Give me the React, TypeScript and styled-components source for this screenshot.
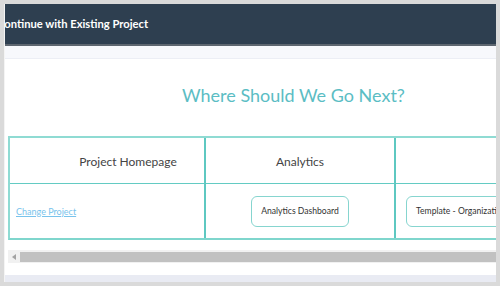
import React from "react";
import styled, { createGlobalStyle } from "styled-components";

const Global = createGlobalStyle`
  html, body { margin: 0; padding: 0; }
  body { width: 500px; height: 286px; overflow: hidden; background: #d8d8d8; font-family: Lato, "Open Sans", sans-serif; }
`;

const Frame = styled.div`
  width: 500px;
  height: 286px;
  box-sizing: border-box;
  padding: 4px 5px 4px 4px;
  background: #dadada;
`;

const Inner = styled.div`
  width: 100%;
  height: 100%;
  background: #ffffff;
  border-left: 1px solid #f4f4f4;
  overflow: hidden;
  display: flex;
  flex-direction: column;
`;

const Header = styled.div`
  height: 39px;
  flex: none;
  background: #2e3f50;
  border-bottom: 2px solid #5d6670;
  display: flex;
  align-items: center;
  overflow: hidden;
  padding-bottom: 1px;
`;

const HeaderTitle = styled.h1`
  margin: 0 0 0 -8px;
  color: #ffffff;
  font-size: 11.2px;
  font-weight: 700;
  white-space: nowrap;
`;

const SubBar = styled.div`
  height: 12px;
  flex: none;
  background: #f7f8fc;
  border-bottom: 1px solid #eceef5;
`;

const Title = styled.h2`
  margin: 24px 0 0 177px;
  color: #5bbdc4;
  font-size: 18px;
  font-weight: 400;
  white-space: nowrap;
  line-height: 24px;
`;

const TableWrap = styled.div`
  margin: 29px 0 0 3px;
  overflow: hidden;
  flex: none;
`;

const Table = styled.div`
  display: grid;
  grid-template-columns: 196px 190px 220px;
  grid-template-rows: 46px 54px;
  width: 606px;
  border-top: 2px solid #8fdbd3;
  border-left: 2px solid #8fdbd3;
  border-bottom: 2px solid #7fd6cd;
`;

const Cell = styled.div<{ $head?: boolean; $align?: string }>`
  box-sizing: border-box;
  border-right: 2px solid #5ec8c1;
  border-bottom: ${(p) => (p.$head ? "1px solid #63cbc3" : "none")};
  display: flex;
  align-items: center;
  justify-content: ${(p) => p.$align || "center"};
  color: #444;
  font-size: 12px;
  overflow: hidden;
  white-space: nowrap;
`;

const HeadText = styled.span<{ $shift?: number }>`
  margin-left: ${(p) => p.$shift || 0}px;
  padding-top: 2px;
`;

const Link = styled.a`
  margin-left: 6px;
  color: #79c3ec;
  font-size: 9px;
  text-decoration: underline;
`;

const Pill = styled.div<{ $offset?: number }>`
  box-sizing: border-box;
  height: 31px;
  flex: none;
  margin-left: ${(p) => p.$offset || 0}px;
  border: 1px solid #86d5cf;
  border-radius: 6px;
  display: flex;
  align-items: center;
  justify-content: center;
  padding: 0 9px;
  font-size: 8.6px;
  color: #333;
`;

const Scroll = styled.div`
  margin: 10px 0 0 3px;
  height: 13px;
  flex: none;
  display: flex;
  background: #f1f1f1;
  overflow: hidden;
`;

const Arrow = styled.div`
  width: 11px;
  flex: none;
  display: flex;
  align-items: center;
  justify-content: center;
`;

const Thumb = styled.div`
  flex: 1;
  margin: 2px 0 1px 1px;
  background: #c1c1c1;
`;

const BottomBar = styled.div`
  margin-top: 12px;
  height: 7px;
  flex: none;
  background: #e9ebf3;
`;

export default function App() {
  return (
    <>
      <Global />
      <Frame>
        <Inner>
          <Header>
            <HeaderTitle>Continue with Existing Project</HeaderTitle>
          </Header>
          <SubBar />
          <Title>Where Should We Go Next?</Title>
          <TableWrap>
            <Table>
              <Cell $head>
                <HeadText $shift={42}>Project Homepage</HeadText>
              </Cell>
              <Cell $head>
                <HeadText>Analytics</HeadText>
              </Cell>
              <Cell $head />
              <Cell $align="flex-start">
                <Link href="#">Change Project</Link>
              </Cell>
              <Cell>
                <Pill>Analytics Dashboard</Pill>
              </Cell>
              <Cell $align="flex-start">
                <Pill $offset={10}>Template - Organization Overview</Pill>
              </Cell>
            </Table>
          </TableWrap>
          <Scroll>
            <Arrow>
              <svg width="4" height="6" viewBox="0 0 4 6">
                <path d="M4 0 L0 3 L4 6 Z" fill="#a3a3a3" />
              </svg>
            </Arrow>
            <Thumb />
          </Scroll>
          <BottomBar />
        </Inner>
      </Frame>
    </>
  );
}
